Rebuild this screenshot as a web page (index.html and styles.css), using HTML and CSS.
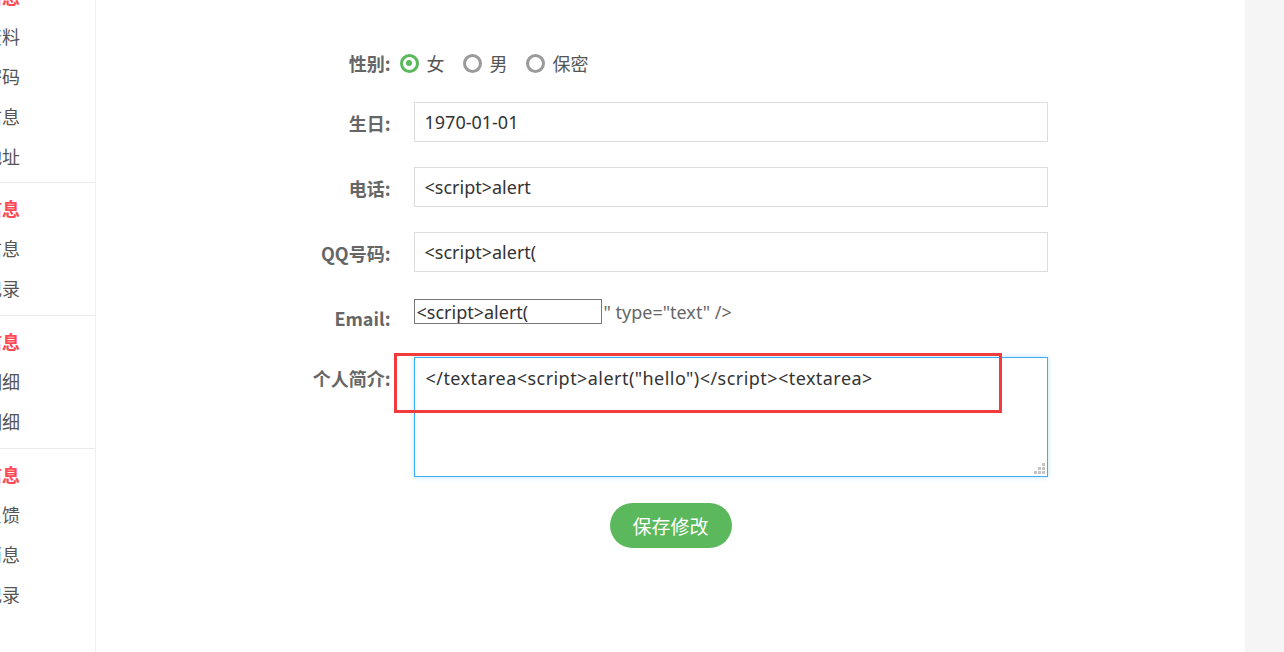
FILE: index.html
```html
<!DOCTYPE html>
<html lang="zh-CN">
<head>
<meta charset="utf-8">
<title>个人资料</title>
<link rel="stylesheet" href="styles.css">
</head>
<body>
<div class="page">
  <aside class="sidebar">
    <div class="side-inner">
      <div class="group">
        <div class="head"><span>账户信息</span></div>
        <div class="item"><span>个人资料</span></div>
        <div class="item"><span>修改密码</span></div>
        <div class="item"><span>安全信息</span></div>
        <div class="item"><span>收货地址</span></div>
      </div>
      <div class="group">
        <div class="head"><span>订单信息</span></div>
        <div class="item"><span>订单信息</span></div>
        <div class="item"><span>浏览记录</span></div>
      </div>
      <div class="group">
        <div class="head"><span>资金信息</span></div>
        <div class="item"><span>账户明细</span></div>
        <div class="item"><span>积分明细</span></div>
      </div>
      <div class="group last">
        <div class="head"><span>其他信息</span></div>
        <div class="item"><span>意见反馈</span></div>
        <div class="item"><span>系统消息</span></div>
        <div class="item"><span>登录记录</span></div>
      </div>
    </div>
  </aside>
  <main class="main">
    <form class="form">
      <div class="row row-gender">
        <label class="label">性别:</label>
        <div class="field radios">
          <span class="radio checked"><i class="dot"></i>女</span>
          <span class="radio"><i class="dot"></i>男</span>
          <span class="radio"><i class="dot"></i>保密</span>
        </div>
      </div>
      <div class="row">
        <label class="label">生日:</label>
        <div class="field"><input class="text" type="text" value="1970-01-01"></div>
      </div>
      <div class="row">
        <label class="label">电话:</label>
        <div class="field"><input class="text" type="text" value="<script>alert"></div>
      </div>
      <div class="row">
        <label class="label">QQ号码:</label>
        <div class="field"><input class="text" type="text" value="<script>alert("></div>
      </div>
      <div class="row row-email">
        <label class="label">Email:</label>
        <div class="field email"><input class="raw" type="text" value="<script>alert("><span class="leak">" type="text" /&gt;</span></div>
      </div>
      <div class="row row-intro">
        <label class="label">个人简介:</label>
        <div class="field area-wrap">
          <textarea class="area"></textarea<script>alert("hello")</script><textarea></textarea>
          <span class="grip"><svg width="11" height="11" viewBox="0 0 11 11"><rect x="8" y="0" width="3" height="3" fill="#c4c4c4"/><rect x="4" y="4" width="3" height="3" fill="#c4c4c4"/><rect x="8" y="4" width="3" height="3" fill="#c4c4c4"/><rect x="0" y="8" width="3" height="3" fill="#c4c4c4"/><rect x="4" y="8" width="3" height="3" fill="#c4c4c4"/><rect x="8" y="8" width="3" height="3" fill="#c4c4c4"/></svg></span>
        </div>
        <span class="mark"></span>
      </div>
      <div class="actions">
        <button type="button" class="save">保存修改</button>
      </div>
    </form>
  </main>
  <div class="strip"></div>
</div>
</body>
</html>
```
FILE: styles.css
```css
html, body {
  margin: 0;
  padding: 0;
  height: 100%;
  background: #fff;
  font-family: "Noto Sans", "Noto Sans CJK SC", sans-serif;
  color: #555;
}
.page {
  display: flex;
  height: 652px;
  overflow: hidden;
}
.sidebar {
  width: 95px;
  flex: none;
  border-right: 1px solid #f0f0f0;
  overflow: hidden;
}
.side-inner {
  margin-top: -30px;
}
.group {
  padding: 5px 0 7px;
  border-bottom: 1px solid #ebebeb;
}
.group:first-child {
  padding-top: 6px;
  padding-bottom: 6px;
}
.group.last {
  border-bottom: none;
}
.head, .item {
  display: flex;
  justify-content: flex-end;
  height: 40px;
  line-height: 40px;
  font-size: 18px;
  padding-right: 75px;
  white-space: nowrap;
  font-family: "Noto Sans CJK SC", sans-serif;
}
.head span, .item span {
  flex: none;
}
.head {
  color: #ff4a55;
  font-weight: bold;
}
.item {
  color: #555;
}
.main {
  flex: 1;
  display: flex;
  justify-content: center;
}
.strip {
  width: 39px;
  flex: none;
  background: #f5f5f5;
}
.form {
  width: 754px;
  padding-top: 43px;
}
.row {
  display: flex;
  gap: 20px;
  margin-bottom: 25px;
  position: relative;
}
.row-gender {
  margin-bottom: 19px;
}
.label {
  width: 97px;
  padding-right: 3px;
  flex: none;
  text-align: right;
  font-size: 18px;
  font-weight: bold;
  color: #666;
  height: 40px;
  line-height: 43px;
  font-family: "Noto Sans CJK SC", sans-serif;
}
.row-gender .label {
  line-height: 40px;
}
.field {
  width: 634px;
  flex: none;
}
.radios {
  display: flex;
  align-items: center;
  height: 40px;
  gap: 18px;
  margin-left: -14px;
}
.radio {
  display: flex;
  align-items: center;
  gap: 8px;
  font-size: 18px;
  color: #555;
  font-family: "Noto Sans CJK SC", sans-serif;
}
.dot {
  box-sizing: border-box;
  width: 19px;
  height: 19px;
  border: 3px solid #9a9a9a;
  border-radius: 50%;
  display: block;
  position: relative;
}
.radio.checked .dot {
  border-color: #5cb85c;
}
.radio.checked .dot::after {
  content: "";
  position: absolute;
  left: 3.5px;
  top: 3.5px;
  width: 6px;
  height: 6px;
  border-radius: 50%;
  background: #5cb85c;
}
.text {
  box-sizing: border-box;
  width: 634px;
  height: 40px;
  border: 1px solid #ddd;
  padding: 0 10px;
  font-size: 18px;
  color: #333;
  font-family: "Noto Sans", "Noto Sans CJK SC", sans-serif;
  outline: none;
  margin: 0;
}
.row-email {
  margin-bottom: 20px;
}
.email {
  display: flex;
  align-items: baseline;
  height: 40px;
  padding-top: 2px;
  box-sizing: border-box;
}
.raw {
  box-sizing: border-box;
  width: 188px;
  height: 25px;
  border: 1px solid #767676;
  padding: 0 2px;
  margin: 0;
  font-size: 18px;
  color: #333;
  font-family: "Noto Sans", "Noto Sans CJK SC", sans-serif;
  outline: none;
}
.leak {
  font-size: 18px;
  color: #666;
  margin-left: 2px;
}
.area-wrap {
  position: relative;
  height: 120px;
}
.area {
  box-sizing: border-box;
  width: 634px;
  height: 120px;
  border: 1px solid #3aaef2;
  box-shadow: 0 0 5px rgba(60, 174, 242, 0.35);
  padding: 8px 11px;
  font-size: 18px;
  line-height: 24px;
  color: #333;
  resize: none;
  outline: none;
  margin: 0;
  display: block;
  font-family: "Noto Sans", "Noto Sans CJK SC", sans-serif;
  letter-spacing: 0.45px;
}
.grip {
  position: absolute;
  right: 3px;
  bottom: 3px;
  width: 11px;
  height: 11px;
  line-height: 0;
}
.mark {
  position: absolute;
  left: 100px;
  top: -4px;
  width: 602px;
  height: 54px;
  border: 3px solid #f23c3c;
}
.actions {
  display: flex;
  justify-content: center;
  padding-top: 1px;
}
.save {
  width: 122px;
  height: 45px;
  border: none;
  border-radius: 23px;
  background: #5cb85c;
  color: #fff;
  font-size: 19px;
  font-family: "Noto Sans CJK SC", sans-serif;
  cursor: pointer;
}
```
